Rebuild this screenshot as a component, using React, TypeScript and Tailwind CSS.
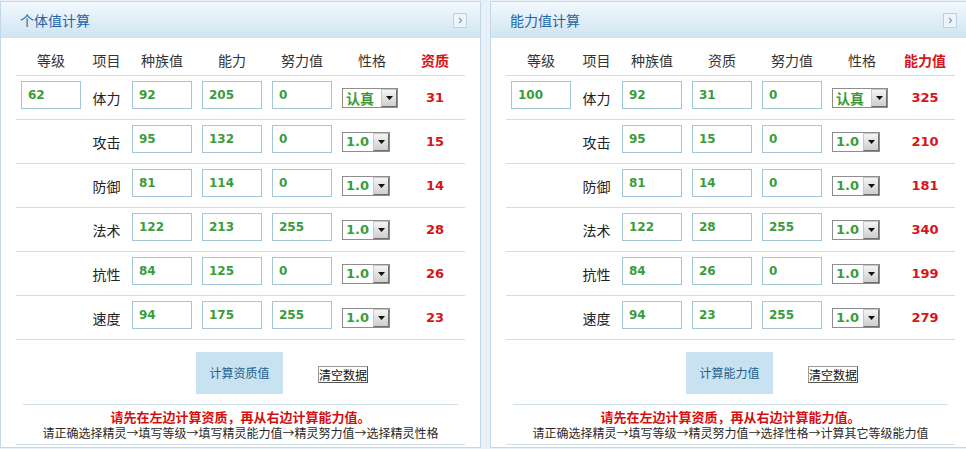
import React from "react";

type Row = { name: string; a: string; b: string; c: string; sel: string; res: string };

const leftRows: Row[] = [
  { name: "体力", a: "92", b: "205", c: "0", sel: "认真", res: "31" },
  { name: "攻击", a: "95", b: "132", c: "0", sel: "1.0", res: "15" },
  { name: "防御", a: "81", b: "114", c: "0", sel: "1.0", res: "14" },
  { name: "法术", a: "122", b: "213", c: "255", sel: "1.0", res: "28" },
  { name: "抗性", a: "84", b: "125", c: "0", sel: "1.0", res: "26" },
  { name: "速度", a: "94", b: "175", c: "255", sel: "1.0", res: "23" },
];

const rightRows: Row[] = [
  { name: "体力", a: "92", b: "31", c: "0", sel: "认真", res: "325" },
  { name: "攻击", a: "95", b: "15", c: "0", sel: "1.0", res: "210" },
  { name: "防御", a: "81", b: "14", c: "0", sel: "1.0", res: "181" },
  { name: "法术", a: "122", b: "28", c: "255", sel: "1.0", res: "340" },
  { name: "抗性", a: "84", b: "26", c: "0", sel: "1.0", res: "199" },
  { name: "速度", a: "94", b: "23", c: "255", sel: "1.0", res: "279" },
];

function Field({ value }: { value: string }) {
  return (
    <div className="mb-[6px] flex h-[28px] w-[60px] items-center border border-[#a3c6d8] bg-white pl-[6px] font-['DejaVu_Sans',sans-serif] text-[12px] leading-none font-bold text-[#3a9c3a]">
      {value}
    </div>
  );
}

function Select({ value }: { value: string }) {
  const cjk = value === "认真";
  return (
    <div
      className={
        "flex h-[20px] items-center border border-[#8e8e8e] bg-white " +
        (cjk ? "w-[56px]" : "w-[48px]")
      }
    >
      <div
        className={
          "flex flex-1 items-center pl-[3px] font-bold text-[#3a9c3a] " +
          (cjk
            ? "font-['Noto_Sans_CJK_SC',sans-serif] text-[14px] leading-[16px]"
            : "font-['DejaVu_Sans',sans-serif] text-[13px] leading-none")
        }
      >
        {value}
      </div>
      <div className="flex h-[18px] w-[16px] items-center justify-center border border-t-[#c8c8c8] border-l-[#c8c8c8] border-r-[#6e6e6e] border-b-[#6e6e6e] bg-gradient-to-b from-[#f4f4f4] to-[#cfcfcf]">
        <svg width="7" height="4" viewBox="0 0 7 4">
          <path d="M0 0 H7 L3.5 4 Z" fill="#111" />
        </svg>
      </div>
    </div>
  );
}

function Panel({
  title,
  headers,
  level,
  rows,
  button,
  line2,
}: {
  title: string;
  headers: string[];
  level: string;
  rows: Row[];
  button: string;
  line2: string;
}) {
  const grid = "grid grid-cols-[70px_41px_70px_70px_70px_70px_56px]";
  return (
    <div className="flex h-[447px] w-[481px] shrink-0 flex-col border border-[#c2d8e7] bg-white font-['Noto_Sans_CJK_SC',sans-serif]">
      <div className="flex h-[36px] shrink-0 items-center justify-between bg-gradient-to-b from-[#f2f8fc] to-[#cfe4f2] pr-[13px] pl-[19px]">
        <span className="text-[14px] leading-[16px] text-[#1d66aa]">{title}</span>
        <div className="flex h-[15px] w-[14px] items-center justify-center border border-[#bcd2e2] bg-[#eef5fa]">
          <svg width="5" height="7" viewBox="0 0 5 7">
            <path d="M1 1 L3.5 3.5 L1 6" stroke="#7d9bb4" strokeWidth="1.2" fill="none" />
          </svg>
        </div>
      </div>

      <div className="mx-[15px]">
        <div className={grid + " h-[38px] border-b border-[#cfe0eb] pt-[7px]"}>
          {headers.map((h, i) => (
            <div
              key={h}
              className={
                "flex items-center justify-center text-[14px] leading-[16px] " +
                (i === 6 ? "font-bold text-[#d8141a]" : "text-[#333]")
              }
            >
              {h}
            </div>
          ))}
        </div>
        {rows.map((r, idx) => (
          <div key={r.name} className={grid + " h-[44px] items-center border-b border-[#cfe0eb]"}>
            <div className="pl-[5px]">{idx === 0 ? <Field value={level} /> : null}</div>
            <div className="text-center text-[14px] leading-[16px] text-[#222]">{r.name}</div>
            <div className="pl-[5px]">
              <Field value={r.a} />
            </div>
            <div className="pl-[5px]">
              <Field value={r.b} />
            </div>
            <div className="pl-[5px]">
              <Field value={r.c} />
            </div>
            <div className="pl-[5px]">
              <Select value={r.sel} />
            </div>
            <div className="text-center font-['DejaVu_Sans',sans-serif] text-[13px] leading-none font-bold text-[#d8141a]">
              {r.res}
            </div>
          </div>
        ))}
      </div>

      <div className="flex h-[64px] shrink-0 items-start pt-[12px] pl-[195px]">
        <div className="flex h-[42px] w-[87px] items-center justify-center bg-[#c9e2f1] text-[12px] leading-[14px] text-[#1f5f8c]">
          {button}
        </div>
        <div className="mt-[14px] ml-[35px] flex h-[17px] w-[50px] items-center justify-center border border-t-[#9a9a9a] border-l-[#9a9a9a] border-r-[#555] border-b-[#555] bg-white text-[12px] leading-[14px] text-[#111]">
          清空数据
        </div>
      </div>

      <div className="mx-[22px] border-t border-[#cfe0eb] pt-[4px] text-center">
        <div className="text-[13px] leading-[16px] font-bold text-[#d40f0f]">
          请先在左边计算资质，再从右边计算能力值。
        </div>
        <div className="text-[12px] leading-[15px] text-[#2a2a2a]">{line2}</div>
      </div>
      <div className="mx-[15px] mt-[4px] border-t border-[#cfe0eb]" />
    </div>
  );
}

export default function App() {
  return (
    <div className="flex h-[449px] w-[966px] gap-[9px] overflow-hidden bg-[#e9f1f8] pt-[1px]">
      <Panel
        title="个体值计算"
        headers={["等级", "项目", "种族值", "能力", "努力值", "性格", "资质"]}
        level="62"
        rows={leftRows}
        button="计算资质值"
        line2="请正确选择精灵→填写等级→填写精灵能力值→精灵努力值→选择精灵性格"
      />
      <Panel
        title="能力值计算"
        headers={["等级", "项目", "种族值", "资质", "努力值", "性格", "能力值"]}
        level="100"
        rows={rightRows}
        button="计算能力值"
        line2="请正确选择精灵→填写等级→精灵努力值→选择性格→计算其它等级能力值"
      />
    </div>
  );
}
